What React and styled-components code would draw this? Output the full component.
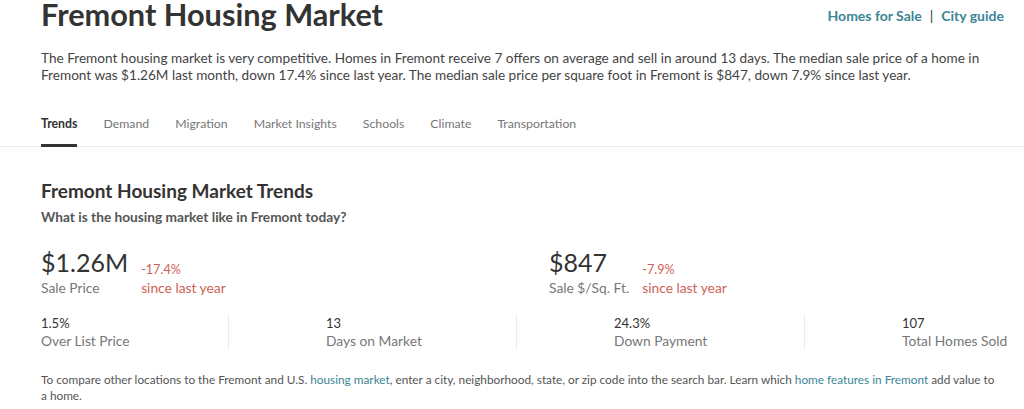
import React from 'react';
import styled, { createGlobalStyle } from 'styled-components';

const GlobalStyle = createGlobalStyle`
  html, body {
    margin: 0;
    padding: 0;
    background: #fff;
    overflow: hidden;
  }
  body {
    font-family: Lato, "Open Sans", Arial, sans-serif;
    color: #333;
  }
`;

const colors = {
  text: '#333',
  body: '#444',
  muted: '#777',
  teal: '#3d8595',
  red: '#cd5f57',
  border: '#ececec',
};

const Page = styled.div`
  width: 1024px;
  height: 409px;
  overflow: hidden;
`;

const Inner = styled.div`
  padding: 0 20px 0 41px;
`;

const Header = styled.div`
  display: flex;
  align-items: flex-start;
  justify-content: space-between;
`;

const Title = styled.h1`
  margin: -3px 0 0;
  font-size: 30.7px;
  line-height: 36px;
  font-weight: 700;
  color: ${colors.text};
`;

const Links = styled.div`
  display: flex;
  align-items: center;
  gap: 8px;
  margin-top: 7px;
  font-size: 14px;
  font-weight: 700;
  color: ${colors.teal};
`;

const Sep = styled.span`
  color: ${colors.text};
  font-weight: 400;
`;

const Intro = styled.p`
  margin: 17px 0 0;
  font-size: 13.6px;
  line-height: 17px;
  color: ${colors.body};
`;

const Tabs = styled.nav`
  display: flex;
  gap: 26px;
  margin: 32px -20px 0 -41px;
  padding-left: 41px;
  border-bottom: 1px solid ${colors.border};
`;

const Tab = styled.span`
  font-size: 12.3px;
  line-height: 16px;
  padding-bottom: 12px;
  color: ${p => (p.$active ? colors.text : colors.muted)};
  font-weight: ${p => (p.$active ? 700 : 400)};
  border-bottom: 3px solid ${p => (p.$active ? '#333' : 'transparent')};
  margin-bottom: -1px;
`;

const SectionTitle = styled.h2`
  margin: 33px 0 0;
  font-size: 19px;
  line-height: 22px;
  font-weight: 700;
  color: ${colors.text};
`;

const Question = styled.h3`
  margin: 7px 0 0;
  font-size: 13.7px;
  line-height: 16px;
  font-weight: 700;
  color: #555;
`;

const Headline = styled.div`
  display: grid;
  grid-template-columns: 508px 1fr;
  margin-top: 23px;
`;

const Metric = styled.div`
  display: flex;
  gap: 13px;
`;

const MetricMain = styled.div`
  display: flex;
  flex-direction: column;
`;

const BigValue = styled.span`
  font-size: 25px;
  line-height: 29px;
  margin-bottom: 3px;
  font-weight: 400;
  color: ${colors.text};
`;

const SmallLabel = styled.span`
  font-size: ${p => (p.$red ? 13.8 : 13.8)}px;
  line-height: 16px;
  white-space: nowrap;
  color: ${p => (p.$red ? colors.red : colors.muted)};
`;

const Change = styled.div`
  display: flex;
  flex-direction: column;
  justify-content: flex-end;
`;

const Delta = styled.span`
  font-size: 12.6px;
  line-height: 15px;
  color: ${colors.red};
  margin-bottom: 3px;
`;

const StatRow = styled.div`
  display: grid;
  grid-template-columns: 187px 288px 288px 1fr;
  margin-top: 18px;
`;

const Stat = styled.div`
  display: flex;
  flex-direction: column;
  white-space: nowrap;
  padding-left: ${p => (p.$first ? 0 : 97)}px;
  border-left: ${p => (p.$first ? 'none' : `1px solid ${colors.border}`)};
`;

const StatValue = styled.span`
  font-size: 13px;
  line-height: 18px;
  color: ${colors.text};
`;

const StatLabel = styled.span`
  font-size: 13.8px;
  line-height: 18px;
  color: ${colors.muted};
`;

const Footnote = styled.p`
  margin: 22px 8px 0 0;
  font-size: 11.8px;
  line-height: 16px;
  color: #555;
`;

const Link = styled.span`
  color: ${colors.teal};
`;

const tabs = ['Trends', 'Demand', 'Migration', 'Market Insights', 'Schools', 'Climate', 'Transportation'];

const stats = [
  { value: '1.5%', label: 'Over List Price' },
  { value: '13', label: 'Days on Market' },
  { value: '24.3%', label: 'Down Payment' },
  { value: '107', label: 'Total Homes Sold' },
];

const metrics = [
  { value: '$1.26M', label: 'Sale Price', delta: '-17.4%' },
  { value: '$847', label: 'Sale $/Sq. Ft.', delta: '-7.9%' },
];

export default function App() {
  return (
    <Page>
      <GlobalStyle />
      <Inner>
        <Header>
          <Title>Fremont Housing Market</Title>
          <Links>
            <span>Homes for Sale</span>
            <Sep>|</Sep>
            <span>City guide</span>
          </Links>
        </Header>
        <Intro>
          The Fremont housing market is very competitive. Homes in Fremont receive 7 offers on average and sell in around 13 days. The median sale price of a home in Fremont was $1.26M last month, down 17.4% since last year. The median sale price per square foot in Fremont is $847, down 7.9% since last year.
        </Intro>
        <Tabs>
          {tabs.map((t, i) => (
            <Tab key={t} $active={i === 0}>{t}</Tab>
          ))}
        </Tabs>
        <SectionTitle>Fremont Housing Market Trends</SectionTitle>
        <Question>What is the housing market like in Fremont today?</Question>
        <Headline>
          {metrics.map(m => (
            <Metric key={m.label}>
              <MetricMain>
                <BigValue>{m.value}</BigValue>
                <SmallLabel>{m.label}</SmallLabel>
              </MetricMain>
              <Change>
                <Delta>{m.delta}</Delta>
                <SmallLabel $red>since last year</SmallLabel>
              </Change>
            </Metric>
          ))}
        </Headline>
        <StatRow>
          {stats.map((s, i) => (
            <Stat key={s.label} $first={i === 0}>
              <StatValue>{s.value}</StatValue>
              <StatLabel>{s.label}</StatLabel>
            </Stat>
          ))}
        </StatRow>
        <Footnote>
          To compare other locations to the Fremont and U.S. <Link>housing market</Link>, enter a city, neighborhood, state, or zip code into the search bar. Learn which <Link>home features in Fremont</Link> add value to a home.
        </Footnote>
      </Inner>
    </Page>
  );
}
